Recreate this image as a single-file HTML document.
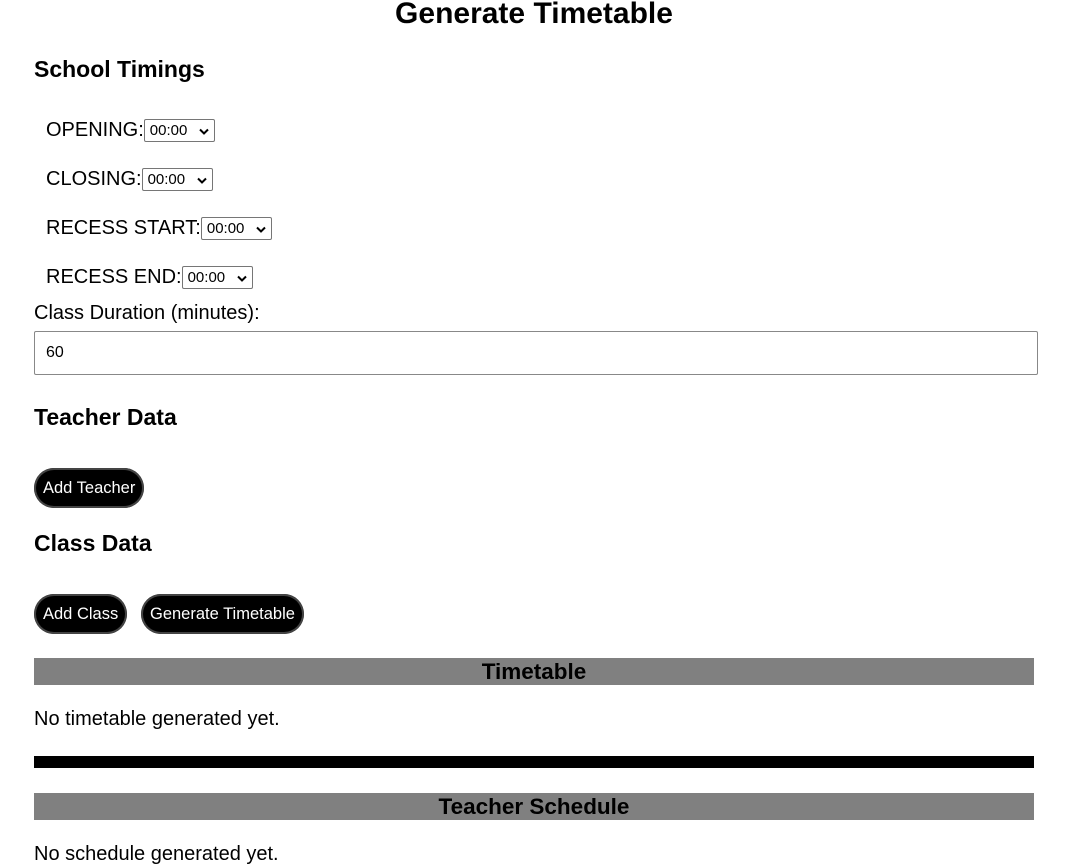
<!DOCTYPE html>
<html><head><style>
body{margin:0;width:1077px;height:866px;overflow:hidden;font-family:"Liberation Sans",Arial,sans-serif;color:#000;background:#fff;position:relative}
.a{position:absolute;white-space:nowrap}
h1{font-size:30px;margin:0}
.h{font-size:23px;font-weight:bold}
.t{font-size:20px}
.sel{display:inline-block;box-sizing:border-box;width:71px;border:1px solid #767676;border-radius:2px;font-size:15px;height:23px;line-height:22px;padding:0 0 0 5px;vertical-align:middle;position:relative;top:0px}
.sel svg{position:absolute;right:5px;top:8px}
.btn{background:#000;color:#fff;font-size:16.5px;border-radius:20px;height:40px;line-height:40px;padding:0 9px;box-shadow:inset 0 0 0 2px #444;box-sizing:border-box}
.bar{position:absolute;left:34px;width:1000px;background:#808080;height:27px;text-align:center;font-size:22.5px;font-weight:bold;line-height:27px}
</style></head><body>
<div class="a" style="left:0;width:1068px;text-align:center;top:-3px"><h1>Generate Timetable</h1></div>
<div class="a h" style="left:34px;top:56px">School Timings</div>
<div class="a t" style="left:46px;top:119px">OPENING:<span class="sel">00:00<svg width="10" height="7" viewBox="0 0 10 7"><path d="M1 1.5L5 5.5L9 1.5" stroke="#000" stroke-width="2" fill="none"/></svg></span></div>
<div class="a t" style="left:46px;top:168px">CLOSING:<span class="sel">00:00<svg width="10" height="7" viewBox="0 0 10 7"><path d="M1 1.5L5 5.5L9 1.5" stroke="#000" stroke-width="2" fill="none"/></svg></span></div>
<div class="a t" style="left:46px;top:217px">RECESS START:<span class="sel">00:00<svg width="10" height="7" viewBox="0 0 10 7"><path d="M1 1.5L5 5.5L9 1.5" stroke="#000" stroke-width="2" fill="none"/></svg></span></div>
<div class="a t" style="left:46px;top:266px">RECESS END:<span class="sel">00:00<svg width="10" height="7" viewBox="0 0 10 7"><path d="M1 1.5L5 5.5L9 1.5" stroke="#000" stroke-width="2" fill="none"/></svg></span></div>
<div class="a t" style="left:34px;top:302px">Class Duration (minutes):</div>
<div class="a" style="left:34px;top:331px;width:1004px;height:44px;border:1px solid #888;box-sizing:border-box;border-radius:2px;font-size:16px;line-height:42px;padding-left:11px">60</div>
<div class="a h" style="left:34px;top:404px">Teacher Data</div>
<div class="a btn" style="left:34px;top:468px">Add Teacher</div>
<div class="a h" style="left:34px;top:530px">Class Data</div>
<div class="a btn" style="left:34px;top:594px">Add Class</div>
<div class="a btn" style="left:141px;top:594px">Generate Timetable</div>
<div class="bar" style="top:658px">Timetable</div>
<div class="a t" style="left:34px;top:708px">No timetable generated yet.</div>
<div class="a" style="left:34px;top:756px;width:1000px;height:12px;background:#000"></div>
<div class="bar" style="top:793px">Teacher Schedule</div>
<div class="a t" style="left:34px;top:843px">No schedule generated yet.</div>
</body></html>
